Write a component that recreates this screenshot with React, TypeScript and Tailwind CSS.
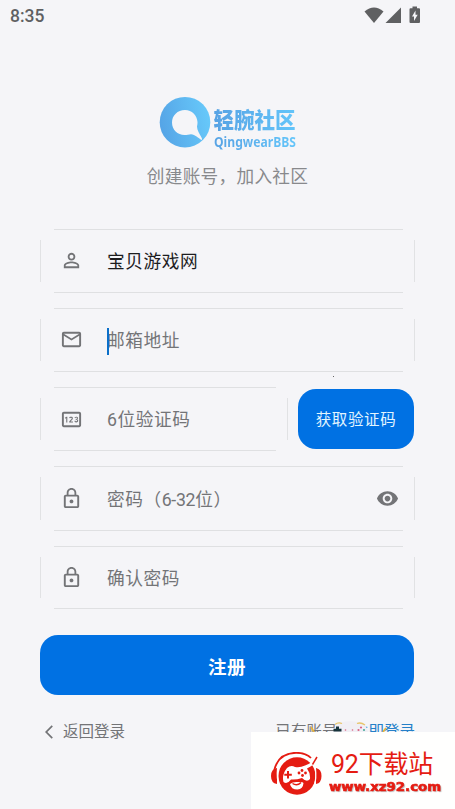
import type { ReactNode } from 'react'
import {
  MdPersonOutline,
  MdMailOutline,
  MdOutlinePin,
  MdLockOutline,
  MdVisibility,
  MdArrowBackIosNew,
} from 'react-icons/md'

interface FieldProps {
  icon: ReactNode
  children: ReactNode
  trailing?: ReactNode
  className?: string
}

// The outline is open at its rounded corners, so each side is its own line
const Field = ({ icon, children, trailing, className = 'h-16' }: FieldProps) => (
  <div className={`relative flex items-center pl-5 pr-4 text-[#737477] ${className}`}>
    <span className="absolute left-3.5 right-3 top-0 h-px bg-[#dfe0e2]" />
    <span className="absolute left-3.5 right-3 bottom-0 h-px bg-[#dfe0e2]" />
    <span className="absolute left-0 top-[11px] bottom-[11px] w-px bg-[#e1e2e4]" />
    <span className="absolute right-0 top-[11px] bottom-[11px] w-px bg-[#e1e2e4]" />
    <span className="w-[47px] text-[23px]">{icon}</span>
    <span className="flex-1 pt-0.5 whitespace-nowrap text-[17.7px] leading-6 tracking-[0.55px]">{children}</span>
    {trailing}
  </div>
)

const StatusBar = () => (
  <div className="flex h-[30px] items-center justify-between pl-2.5 pr-[34px] text-[#5f6062]">
    <span className="pt-0.5 text-[17.5px] font-medium">8:35</span>
    <svg width="57" height="18" viewBox="0 0 57 18" fill="currentColor">
      <path d="M0.5 5.5Q10 -2.5 19.5 5.5L10 17Z" />
      <path d="M37 1.5V17H21.5Z" />
      <path
        fillRule="evenodd"
        d="M48.5 .5h4.5v1.7h2q1 0 1 1V16q0 1-1 1h-8.500q-1 0-1-1V3.200q0-1 1-1h2ZM51.500 4.500L48 10.500h2V15l3.700-6.200h-2.200Z"
      />
    </svg>
  </div>
)

const Brand = () => (
  <div className="flex items-center gap-[3px]">
    <svg width="52" height="52" viewBox="0 0 52 52">
      <defs>
        <linearGradient id="ring" x1="0" y1=".6" x2="1" y2=".4">
          <stop offset="0" stopColor="#55a4e6" />
          <stop offset="1" stopColor="#67c9fa" />
        </linearGradient>
      </defs>
      <circle cx="26" cy="26.200" r="25.300" fill="url(#ring)" />
      <path
        fill="#f5f5f8"
        d="M26 14C18.500 14 13 19.500 13 26.500C13 34 18.500 39 25.500 39C28 39 30 38.200 32 38.200C36 38.500 39.500 42 42.500 44C43.500 43.500 43 42.500 42.500 41.500C40.500 38 38 34 38 30.500C38.500 28.500 38.500 27 38.500 26C38 19 33 14 26 14Z"
      />
    </svg>
    <div className="flex h-[52px] w-[83px] flex-col pt-[11px]">
      <span className="origin-center scale-y-[1.08] whitespace-nowrap bg-linear-to-r from-[#58a3e4] to-[#63c5fa] bg-clip-text font-['Liberation_Sans','Noto_Sans_CJK_SC',sans-serif] text-[20.5px] leading-[25px] font-black text-transparent">
        轻腕社区
      </span>
      <span className="w-max origin-left scale-x-[0.81] whitespace-nowrap bg-linear-to-r from-[#58a3e4] to-[#63c5fa] bg-clip-text font-['Noto_Sans',sans-serif] text-[15px] leading-[18px] font-bold text-transparent">
        QingwearBBS
      </span>
    </div>
  </div>
)

// Game pad that peeks out above the site banner
const GamePad = () => (
  <svg className="absolute left-[307px] top-[718px]" width="88" height="14" viewBox="0 0 88 14">
    <path fill="#f1eff5" d="M27 14Q27 6 34 4.500Q43 2 52 4.500Q60 6 61 14Z" />
    <path d="M28 6.500q3-2.500 7-1M50 5.500q4-1.500 8 1.500" stroke="#e8c56b" strokeWidth="1.300" fill="none" />
    <path fill="#16333a" d="M29 8.500h3v2.200h2.500v2.800h-8v-2.800H29Z" />
    <g fill="#d96483">
      <circle cx="38.500" cy="12" r=".8" />
      <circle cx="45.500" cy="12" r=".8" />
      <circle cx="54" cy="9.500" r="1.100" />
      <circle cx="51.500" cy="12" r="1.100" />
    </g>
    <circle cx="57" cy="12" r="1.100" fill="#4aab9b" />
    <path d="M4 9l3 5M76 14l3-4" stroke="#e5b33d" strokeWidth="1.800" />
  </svg>
)

const SiteBanner = () => (
  <div className="absolute left-[251px] top-[732px] flex h-[77px] w-[204px] bg-[#fffffe] pl-5 text-[#e51c12]">
    <svg className="mt-5 shrink-0" width="52" height="45" viewBox="0 0 52 45">
      <ellipse cx="26" cy="24" rx="18.500" ry="18.800" fill="currentColor" />
      <path d="M3 19Q7 1 25 .8Q35 .8 40 6" stroke="currentColor" strokeWidth="1.800" fill="none" />
      <path d="M6.500 19Q9 4.500 25 3.500Q33 3 39 8.500" stroke="#fff" strokeWidth="1.700" fill="none" />
      <path d="M6 16Q0 17 0 24T6 32ZM45 16Q50.500 17 50.500 24T45 32Z" fill="currentColor" />
      <path d="M6.500 17Q5.500 26 8 33M44.500 17Q45.500 26 43.500 33" stroke="#fff" strokeWidth="1.200" fill="none" />
      <path
        d="M16 16Q20 12.500 24 15Q29 16 34 13.500Q41 11 47 5Q44 13 36 16.500Q39.500 21 39 27Q36 31 31 26Q25 28 20 27.500Q16 33 12.500 30Q10.500 23 16 16Z"
        fill="#fff"
      />
      <path d="M17 19v7.500M13.300 22.700h7.500" stroke="currentColor" strokeWidth="2" />
      <g fill="currentColor">
        <circle cx="31" cy="18.500" r="1.400" />
        <circle cx="34.500" cy="21" r="1.400" />
        <circle cx="31.500" cy="23.500" r="1.400" />
        <circle cx="28" cy="21" r="1.400" />
      </g>
      <path d="M19 32Q22 29.500 27 30Q32 29.500 32.500 31Q32 37 26.500 37.500Q20 37.500 19 32Z" fill="#fff" />
      <path d="M21.500 31.500Q26 34.500 30 30.500" stroke="currentColor" strokeWidth="1.500" fill="none" />
      <path d="M46 5l-4.500 7.500" stroke="currentColor" strokeWidth="1.500" />
    </svg>
    <div className="flex flex-col pl-1.5 pt-[17px]">
      <span className="pl-[2px] text-[25px] leading-8 tracking-[-0.2px] whitespace-nowrap">92下载站</span>
      <span className="w-max origin-left scale-x-[1.16] font-['DejaVu_Sans',sans-serif] text-[11.500px] leading-[13px] font-bold whitespace-nowrap [-webkit-text-stroke:0.6px_#e51c12] [text-shadow:1px_1px_1px_#bbb]">
        www.xz92.com
      </span>
    </div>
  </div>
)

const App = () => {
  return (
    <div className="relative h-[809px] w-[455px] overflow-hidden bg-[#f5f5f8] font-['Roboto','Noto_Sans_CJK_SC',sans-serif]">
      <StatusBar />

      <header className="flex flex-col items-center pt-[66px]">
        <Brand />
        <p className="mt-[17px] text-[17.7px] leading-6 tracking-[0.25px] text-[#88898c]">创建账号，加入社区</p>
      </header>

      <main className="flex flex-col gap-[15.2px] px-10 pt-[39.7px]">
        <Field icon={<MdPersonOutline />}>
          <span className="text-[#1d1d1f]">宝贝游戏网</span>
        </Field>

        <Field icon={<MdMailOutline />}>
          <span className="relative">
            <span className="absolute left-0 top-[-3px] h-[27px] w-[2px] bg-[#0b6fc9]" />
            邮箱地址
          </span>
        </Field>

        <div className="flex items-center justify-between">
          <Field icon={<MdOutlinePin />} className="h-16 w-[248px]">
            6位验证码
          </Field>
          <button className="mr-px h-[60px] w-[116px] rounded-[18px] bg-[#0071e3] pt-[3px] text-[15.5px] tracking-[0.6px] whitespace-nowrap text-[#e2f5ff]">
            获取验证码
          </button>
        </div>

        <Field icon={<MdLockOutline />} trailing={<MdVisibility className="text-[23px]" />} className="h-[65px]">
          密码（<span className="tracking-[-0.3px]">6-32</span>位）
        </Field>

        <Field icon={<MdLockOutline />} className="h-[63px]">
          确认密码
        </Field>

        <button className="mt-[10px] h-[60px] w-[374px] rounded-[18px] bg-[#0071e3] pt-2 text-[18.500px] font-bold tracking-[0.5px] text-white">
          注册
        </button>
      </main>

      <footer className="flex items-center justify-between pl-[41px] pr-10 pt-[25px] text-[15.500px] leading-6 text-[#737477]">
        <span className="flex items-center gap-1.5">
          <MdArrowBackIosNew className="text-[16px]" />
          返回登录
        </span>
        <span className="whitespace-nowrap">
          已有账号？<span className="text-[#2580c8]">立即登录</span>
        </span>
      </footer>

      <span className="absolute left-[333px] top-[376px] size-px bg-[#666]" />
      <GamePad />
      <SiteBanner />
    </div>
  )
}

export default App
